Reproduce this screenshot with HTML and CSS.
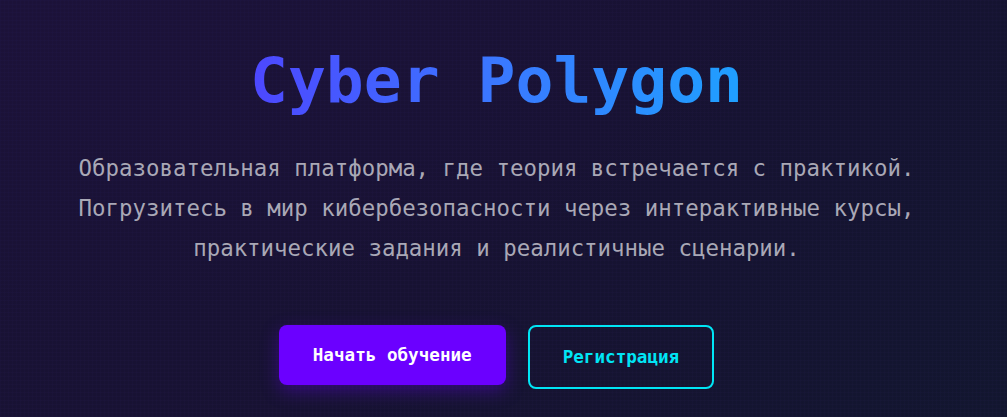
FILE: index.html
```html
<!DOCTYPE html>
<html lang="ru">
<head>
<meta charset="utf-8">
<title>Cyber Polygon</title>
<link rel="stylesheet" href="styles.css">
</head>
<body>
<main class="page">
  <section class="hero">
    <h1 class="hero-title">Cyber Polygon</h1>
    <p class="hero-text">Образовательная платформа, где теория встречается с практикой. Погрузитесь в мир кибербезопасности через интерактивные курсы, практические задания и реалистичные сценарии.</p>
    <div class="hero-actions">
      <a class="btn btn-primary" href="#">Начать обучение</a>
      <a class="btn btn-outline" href="#">Регистрация</a>
    </div>
  </section>
</main>
</body>
</html>
```
FILE: styles.css
```css
html, body {
  margin: 0;
  height: 100%;
}
body {
  font-family: "DejaVu Sans Mono", "Liberation Mono", monospace;
  background-color: #161231;
  background-image:
    linear-gradient(rgba(120, 90, 255, 0.018) 1px, transparent 1px),
    linear-gradient(90deg, rgba(120, 90, 255, 0.018) 1px, transparent 1px),
    radial-gradient(ellipse at 0% 0%, #1c1239 0%, transparent 55%),
    linear-gradient(135deg, #1a1236 0%, #171232 50%, #12162f 100%);
  background-size: 4px 4px, 4px 4px, 100% 100%, 100% 100%;
  overflow: hidden;
}
.page {
  padding-right: 14px;
}
.hero {
  display: flex;
  flex-direction: column;
  align-items: center;
  text-align: center;
  padding-top: 43px;
}
.hero-title {
  margin: 0;
  font-size: 63px;
  line-height: 1.2;
  font-weight: 700;
  background: linear-gradient(90deg, #4d47ff 0%, #3a78ff 50%, #1fa0ff 100%);
  -webkit-background-clip: text;
  background-clip: text;
  color: transparent;
}
.hero-text {
  margin: 29px 0 0;
  max-width: 860px;
  font-size: 22.4px;
  line-height: 40px;
  color: #a9a8b6;
}
.hero-actions {
  display: flex;
  gap: 22px;
  align-items: flex-start;
  margin-top: 57px;
}
.btn {
  display: inline-block;
  font-size: 17.6px;
  line-height: 22px;
  font-weight: 700;
  text-decoration: none;
  border-radius: 8px;
}
.btn-primary {
  padding: 19px 34px;
  background: #6b00ff;
  color: #ffffff;
  box-shadow: 0 6px 18px rgba(107, 0, 255, 0.35);
}
.btn-outline {
  padding: 19px 33px;
  border: 2px solid #00e5f5;
  color: #00e5f5;
  background: transparent;
}
```
